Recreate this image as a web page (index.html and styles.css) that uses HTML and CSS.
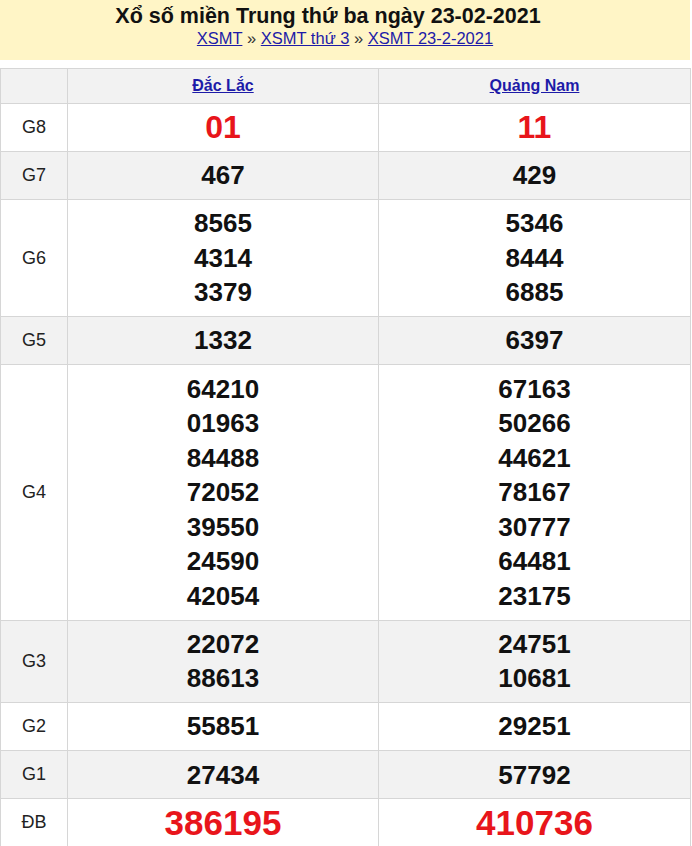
FILE: index.html
```html
<!DOCTYPE html>
<html lang="vi">
<head>
<meta charset="utf-8">
<title>XSMT 23-02-2021</title>
<link rel="stylesheet" href="styles.css">
</head>
<body>
<div class="page">
  <div class="head">
    <h2 class="title">Xổ số miền Trung thứ ba ngày 23-02-2021</h2>
    <div class="crumbs"><a href="#">XSMT</a> » <a href="#">XSMT thứ 3</a> » <a href="#">XSMT 23-2-2021</a></div>
  </div>
  <table class="kq">
    <colgroup><col class="c0"><col class="c1"><col class="c2"></colgroup>
    <tr class="hdr"><th></th><th><a href="#">Đắc Lắc</a></th><th><a href="#">Quảng Nam</a></th></tr>
    <tr><td class="lbl">G8</td><td class="n red g8">01</td><td class="n red g8">11</td></tr>
    <tr class="alt"><td class="lbl">G7</td><td class="n">467</td><td class="n">429</td></tr>
    <tr><td class="lbl">G6</td><td class="n">8565<br>4314<br>3379</td><td class="n">5346<br>8444<br>6885</td></tr>
    <tr class="alt"><td class="lbl">G5</td><td class="n">1332</td><td class="n">6397</td></tr>
    <tr><td class="lbl">G4</td><td class="n">64210<br>01963<br>84488<br>72052<br>39550<br>24590<br>42054</td><td class="n">67163<br>50266<br>44621<br>78167<br>30777<br>64481<br>23175</td></tr>
    <tr class="alt"><td class="lbl">G3</td><td class="n">22072<br>88613</td><td class="n">24751<br>10681</td></tr>
    <tr><td class="lbl">G2</td><td class="n">55851</td><td class="n">29251</td></tr>
    <tr class="alt"><td class="lbl">G1</td><td class="n">27434</td><td class="n">57792</td></tr>
    <tr><td class="lbl">ĐB</td><td class="n red db">386195</td><td class="n red db">410736</td></tr>
  </table>
</div>
</body>
</html>
```
FILE: styles.css
```css
html, body {
  margin: 0;
  padding: 0;
  background: #fff;
  font-family: "Liberation Sans", Arial, sans-serif;
}
.page {
  width: 690px;
}
.head {
  background: #fff5c6;
  height: 60px;
  text-align: center;
  margin-bottom: 8px;
  padding-top: 4px;
  box-sizing: border-box;
}
.title {
  margin: 0;
  font-size: 21.5px;
  line-height: 24px;
  font-weight: bold;
  color: #111;
  padding-right: 34px;
}
.crumbs {
  font-size: 16.5px;
  line-height: 20px;
  color: #333;
}
.crumbs a {
  color: #1d1ba8;
  text-decoration: underline;
}
.kq {
  width: 690px;
  border-collapse: collapse;
  table-layout: fixed;
}
.c0 { width: 67px; }
.c1 { width: 311px; }
.c2 { width: 312px; }
.kq th, .kq td {
  border: 1px solid #d6d6d6;
  text-align: center;
  padding: 0;
}
.kq th {
  height: 34px;
  background: #f2f2f2;
  font-size: 16px;
  font-weight: bold;
}
.kq th a {
  color: #1d1ba8;
}
.kq tr.alt td {
  background: #f2f2f2;
}
.lbl {
  font-size: 18px;
  color: #222;
}
.n {
  font-size: 26px;
  font-weight: bold;
  line-height: 34.55px;
  padding: 6.25px 0 !important;
  color: #111;
}
.red {
  color: #e8151b;
}
.g8 {
  font-size: 32px;
}
.db {
  font-size: 35px;
}
```
